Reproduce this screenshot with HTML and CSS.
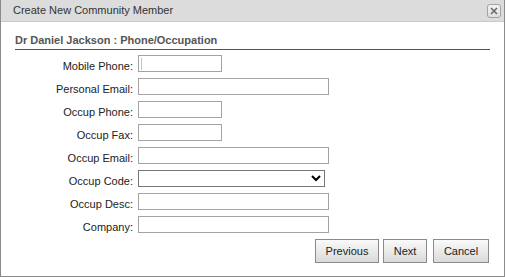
FILE: index.html
```html
<!DOCTYPE html>
<html lang="en">
<head>
<meta charset="utf-8">
<title>Create New Community Member</title>
<link rel="stylesheet" href="styles.css">
</head>
<body>
<div class="dialog">
  <div class="titlebar">
    <span class="title">Create New Community Member</span>
    <button class="close" type="button" aria-label="Close">
      <svg width="8" height="8" viewBox="0 0 8 8"><path d="M1 1L7 7M7 1L1 7" stroke="#6a6a6a" stroke-width="1.6" fill="none"/></svg>
    </button>
  </div>
  <div class="body">
    <h2 class="heading">Dr Daniel Jackson : Phone/Occupation</h2>
    <form class="form">
      <label class="lbl">Mobile Phone:</label><input class="inp short caret" type="text">
      <label class="lbl">Personal Email:</label><input class="inp long" type="text">
      <label class="lbl">Occup Phone:</label><input class="inp short" type="text">
      <label class="lbl">Occup Fax:</label><input class="inp short" type="text">
      <label class="lbl">Occup Email:</label><input class="inp long" type="text">
      <label class="lbl">Occup Code:</label><select class="sel"><option></option></select>
      <label class="lbl">Occup Desc:</label><input class="inp long" type="text">
      <label class="lbl">Company:</label><input class="inp long" type="text">
    </form>
    <div class="actions">
      <button class="btn btn-prev" type="button">Previous</button>
      <button class="btn btn-next" type="button">Next</button>
      <button class="btn btn-cancel" type="button">Cancel</button>
    </div>
  </div>
</div>
</body>
</html>
```
FILE: styles.css
```css
* { box-sizing: border-box; }
html, body { margin: 0; padding: 0; background: #fff; }
body {
  font-family: "Liberation Sans", Arial, sans-serif;
  font-size: 11px;
  color: #222;
}
.dialog {
  width: 505px;
  height: 277px;
  border: 1px solid #8a8a8a;
  border-top: 0;
  display: flex;
  flex-direction: column;
  background: #fff;
}
.titlebar {
  height: 22px;
  background: #dcdcdc;
  border-bottom: 1px solid #cacaca;
  display: flex;
  align-items: center;
  justify-content: space-between;
  padding: 0 3px 0 12px;
}
.title {
  color: #333;
  line-height: 13px;
}
.close {
  width: 14px;
  height: 14px;
  padding: 0;
  margin: 0;
  border: 1px solid #a2a2a2;
  border-radius: 3px;
  background: linear-gradient(#f3f3f3, #dedede);
  display: flex;
  align-items: center;
  justify-content: center;
}
.body {
  padding: 0 14px;
  display: flex;
  flex-direction: column;
}
.heading {
  margin: 12px 0 0;
  font-size: 11px;
  font-weight: bold;
  color: #555;
  line-height: 13px;
  padding-bottom: 2px;
  border-bottom: 1px solid #555;
}
.form {
  margin-top: 5px;
  display: grid;
  grid-template-columns: 118px auto;
  column-gap: 5px;
  row-gap: 6px;
  align-items: start;
  justify-items: start;
}
.lbl {
  justify-self: end;
  padding-top: 5px;
  line-height: 12px;
  color: #222;
  white-space: nowrap;
}
.inp {
  height: 17px;
  border: 1px solid #a3a3a3;
  margin: 0;
  padding: 0 2px;
  font: inherit;
  background: #fff;
}
.short { width: 84px; }
.long { width: 191px; }
.caret {
  background: #fff linear-gradient(#c4c4c4, #c4c4c4) no-repeat 2px 2px / 1px 12px;
}
.sel {
  width: 187px;
  height: 17px;
  margin: 0;
  border: 1px solid #767676;
  border-radius: 0;
  background: #fff;
  font: inherit;
  padding: 0;
}
.actions {
  margin-top: 6px;
  margin-right: 1px;
  display: flex;
  justify-content: flex-end;
  gap: 4px;
}
.btn {
  height: 24px;
  padding: 0;
  border: 1px solid #8a8a8a;
  border-radius: 0;
  background: linear-gradient(#fafafa, #dadada);
  font: inherit;
  color: #222;
}
.btn-prev { width: 64px; }
.btn-next { width: 44px; }
.btn-cancel { width: 56px; margin-left: 2px; }
```
